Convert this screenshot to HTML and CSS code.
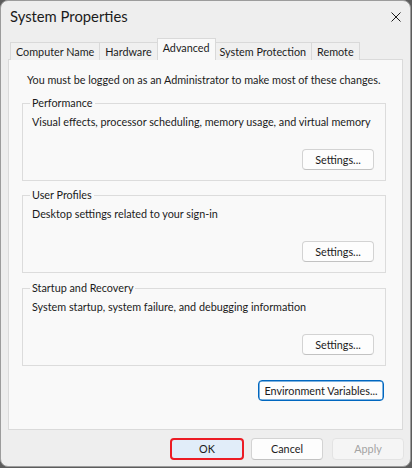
FILE: index.html
```html
<!DOCTYPE html>
<html lang="en">
<head>
<meta charset="utf-8">
<title>System Properties</title>
<link rel="stylesheet" href="styles.css">
</head>
<body>
<div class="window">
  <div class="titlebar">
    <span class="title">System Properties</span>
    <svg class="close" width="10" height="10" viewBox="0 0 10 10"><path d="M0.5 0.5L9.5 9.5M9.5 0.5L0.5 9.5" stroke="#1b1b1b" stroke-width="1" fill="none"/></svg>
  </div>
  <div class="tabs">
    <div class="tab">Computer Name</div>
    <div class="tab">Hardware</div>
    <div class="tab active">Advanced</div>
    <div class="tab">System Protection</div>
    <div class="tab">Remote</div>
  </div>
  <div class="panel">
    <p class="note">You must be logged on as an Administrator to make most of these changes.</p>
    <fieldset class="group first">
      <legend>Performance</legend>
      <p class="desc">Visual effects, processor scheduling, memory usage, and virtual memory</p>
      <div class="actions"><button class="btn">Settings...</button></div>
    </fieldset>
    <fieldset class="group">
      <legend>User Profiles</legend>
      <p class="desc">Desktop settings related to your sign-in</p>
      <div class="actions"><button class="btn">Settings...</button></div>
    </fieldset>
    <fieldset class="group last">
      <legend>Startup and Recovery</legend>
      <p class="desc">System startup, system failure, and debugging information</p>
      <div class="actions"><button class="btn">Settings...</button></div>
    </fieldset>
    <div class="env-row"><button class="btn env">Environment Variables...</button></div>
  </div>
  <div class="footer">
    <button class="btn dlg ok">OK</button>
    <button class="btn dlg">Cancel</button>
    <button class="btn dlg disabled">Apply</button>
  </div>
</div>
</body>
</html>
```
FILE: styles.css
```css
* { box-sizing: border-box; }
html, body { margin: 0; padding: 0; }
body {
  background: #5c5c5c;
  width: 412px;
  height: 468px;
  font-family: Lato, "Liberation Sans", sans-serif;
  font-size: 10.8px;
  color: #1b1b1b;
}
.window {
  width: 411px;
  height: 467px;
  background: #eeeeee;
  border: 1px solid #9c9c9c;
  border-radius: 8px;
  padding: 0 7px;
  display: flex;
  flex-direction: column;
  overflow: hidden;
}
.titlebar {
  height: 38px;
  flex: none;
  display: flex;
  justify-content: space-between;
  align-items: flex-start;
  margin: 0 -7px;
  padding: 6px 9px 0 9px;
}
.title {
  font-size: 14.8px;
  line-height: 18px;
  color: #1b1b1b;
}
.close { margin-top: 5px; }
.tabs {
  display: flex;
  align-items: flex-end;
  padding-left: 2px;
  height: 21px;
  margin-bottom: -1px;
  position: relative;
  z-index: 1;
}
.tab {
  height: 18px;
  line-height: 17px;
  padding: 0 5px;
  border: 1px solid #d9d9d9;
  border-bottom: none;
  background: #f0f0f0;
  margin-left: -1px;
  color: #1b1b1b;
  white-space: nowrap;
}
.tab:first-child { margin-left: 0; }
.tab.active {
  height: 22px;
  line-height: 18px;
  background: #f9f9f9;
  padding: 0 5px;
  margin-right: -1px;
  position: relative;
  z-index: 2;
}
.panel {
  height: 371px;
  flex: none;
  background: #f9f9f9;
  border: 1px solid #dadada;
  padding: 12px 16px 0 13px;
  display: flex;
  flex-direction: column;
}
.note {
  margin: 0 0 7px 5px;
  line-height: 16px;
}
.group {
  margin: 6px 0 0 0;
  border: 1px solid #dcdcdc;
  padding: 0 11px 10px 9px;
  min-width: 0;
}
.group.first { margin-top: 0; }
.group.last { margin-top: 7px; }
.group legend {
  padding: 0 2px;
  margin-left: -2px;
  line-height: 16px;
}
.desc {
  margin: 3px 0 0 0;
  line-height: 16px;
}
.actions {
  display: flex;
  justify-content: flex-end;
  margin-top: 19px;
}
.btn {
  font-family: inherit;
  font-size: 10.8px;
  color: #1b1b1b;
  background: #fdfdfd;
  border: 1px solid #d3d3d3;
  border-bottom-color: #c2c2c2;
  border-radius: 4px;
  height: 21px;
  width: 72px;
  padding: 0;
  line-height: 18px;
}
.env-row {
  display: flex;
  justify-content: flex-end;
  margin-top: 14px;
  padding-right: 2px;
}
.btn.env {
  width: 126px;
  border: 1px solid #0067c0;
  box-shadow: inset 0 0 0 0.5px #0067c0;
}
.footer {
  display: flex;
  justify-content: flex-end;
  gap: 9px;
  margin-top: 8px;
  margin-right: -1px;
}
.btn.dlg {
  height: 22px;
  width: 72px;
}
.btn.ok {
  background: #e1edf9;
  border: 2px solid #ec1c24;
  width: 74px;
  margin-right: -2px;
}
.btn.disabled {
  background: #f5f5f5;
  border-color: #e3e3e3;
  color: #a3a3a3;
}
```
